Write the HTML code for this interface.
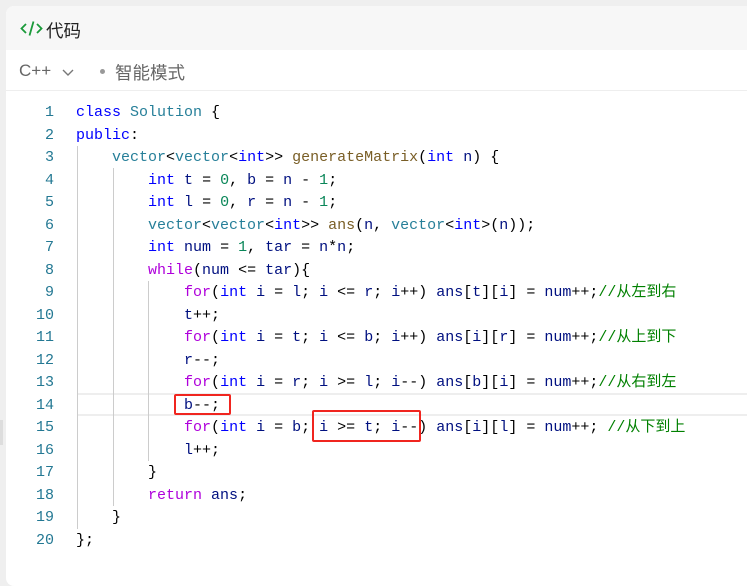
<!DOCTYPE html>
<html><head><meta charset="utf-8"><style>
body{margin:0;width:747px;height:567px;background:#efefef;overflow:hidden;font-family:"Liberation Sans","Noto Sans CJK SC",sans-serif;position:relative}
.card{position:absolute;left:6px;top:6px;width:760px;height:580px;background:#fff;border-radius:8px;overflow:hidden}
.hdr{height:44px;background:#f7f7f7;position:relative;font-size:17.5px;color:#222}
.tb{height:40px;border-bottom:1px solid #eee;position:relative;color:#666;font-size:17px}
.code{position:absolute;left:6px;top:102.2px;font-family:"Liberation Mono","Noto Sans CJK SC",monospace;font-size:15px}
.ln{height:22.5px;line-height:22.5px;white-space:pre;position:relative}
.ln .n{display:inline-block;width:48px;text-align:right;color:#237893;margin-right:22px}
.k{color:#0000ff}.c{color:#267f99}.p{color:#af00db}.g{color:#098658}.f{color:#795e26}.cm{color:#008000}.v{color:#001080}
.guide{position:absolute;width:1px;background:#ccc}
.box{position:absolute;border:2px solid #f0251f;border-radius:2px}
</style></head><body>
<div class="card">
<div class="hdr">
<svg style="position:absolute;left:14px;top:14px" width="23" height="17" viewBox="0 0 23 17" fill="none" stroke="#1a9a3a" stroke-width="1.8"><path d="M6 4L1.5 8.5L6 13M17 4L21.5 8.5L17 13M13.5 1.5L9.5 15.5"/></svg>
<span style="position:absolute;left:40px;top:12px">代码</span></div>
<div class="tb">
<span style="position:absolute;left:13px;top:11px">C++</span>
<svg style="position:absolute;left:56px;top:19px" width="12" height="8" viewBox="0 0 12 8" fill="none" stroke="#777" stroke-width="1.4"><path d="M1 1L6 6L11 1"/></svg>
<span style="position:absolute;left:94px;top:19px;width:5px;height:5px;border-radius:50%;background:#999"></span>
<span style="position:absolute;left:109px;top:10px;font-size:17.5px">智能模式</span>
</div>
</div>
<div style="position:absolute;left:77px;top:393px;width:670px;height:23px;border-top:2px solid #eee;border-bottom:2px solid #eee;box-sizing:border-box"></div>
<div class="guide" style="left:77px;top:146px;height:383px"></div>
<div class="guide" style="left:113px;top:168px;height:338px"></div>
<div class="guide" style="left:148px;top:281px;height:180px"></div>
<div style="position:absolute;left:0;top:420px;width:3px;height:25px;background:#ddd"></div>
<div class="code">
<div class="ln"><span class="n">1</span><span class="k">class</span> <span class="c">Solution</span> {</div>
<div class="ln"><span class="n">2</span><span class="k">public</span>:</div>
<div class="ln"><span class="n">3</span>    <span class="c">vector</span>&lt;<span class="c">vector</span>&lt;<span class="k">int</span>&gt;&gt; <span class="f">generateMatrix</span>(<span class="k">int</span> <span class="v">n</span>) {</div>
<div class="ln"><span class="n">4</span>        <span class="k">int</span> <span class="v">t</span> = <span class="g">0</span>, <span class="v">b</span> = <span class="v">n</span> - <span class="g">1</span>;</div>
<div class="ln"><span class="n">5</span>        <span class="k">int</span> <span class="v">l</span> = <span class="g">0</span>, <span class="v">r</span> = <span class="v">n</span> - <span class="g">1</span>;</div>
<div class="ln"><span class="n">6</span>        <span class="c">vector</span>&lt;<span class="c">vector</span>&lt;<span class="k">int</span>&gt;&gt; <span class="f">ans</span>(<span class="v">n</span>, <span class="c">vector</span>&lt;<span class="k">int</span>&gt;(<span class="v">n</span>));</div>
<div class="ln"><span class="n">7</span>        <span class="k">int</span> <span class="v">num</span> = <span class="g">1</span>, <span class="v">tar</span> = <span class="v">n</span>*<span class="v">n</span>;</div>
<div class="ln"><span class="n">8</span>        <span class="p">while</span>(<span class="v">num</span> &lt;= <span class="v">tar</span>){</div>
<div class="ln"><span class="n">9</span>            <span class="p">for</span>(<span class="k">int</span> <span class="v">i</span> = <span class="v">l</span>; <span class="v">i</span> &lt;= <span class="v">r</span>; <span class="v">i</span>++) <span class="v">ans</span>[<span class="v">t</span>][<span class="v">i</span>] = <span class="v">num</span>++;<span class="cm">//从左到右</span></div>
<div class="ln"><span class="n">10</span>            <span class="v">t</span>++;</div>
<div class="ln"><span class="n">11</span>            <span class="p">for</span>(<span class="k">int</span> <span class="v">i</span> = <span class="v">t</span>; <span class="v">i</span> &lt;= <span class="v">b</span>; <span class="v">i</span>++) <span class="v">ans</span>[<span class="v">i</span>][<span class="v">r</span>] = <span class="v">num</span>++;<span class="cm">//从上到下</span></div>
<div class="ln"><span class="n">12</span>            <span class="v">r</span>--;</div>
<div class="ln"><span class="n">13</span>            <span class="p">for</span>(<span class="k">int</span> <span class="v">i</span> = <span class="v">r</span>; <span class="v">i</span> &gt;= <span class="v">l</span>; <span class="v">i</span>--) <span class="v">ans</span>[<span class="v">b</span>][<span class="v">i</span>] = <span class="v">num</span>++;<span class="cm">//从右到左</span></div>
<div class="ln"><span class="n">14</span>            <span class="v">b</span>--;</div>
<div class="ln"><span class="n">15</span>            <span class="p">for</span>(<span class="k">int</span> <span class="v">i</span> = <span class="v">b</span>; <span class="v">i</span> &gt;= <span class="v">t</span>; <span class="v">i</span>--) <span class="v">ans</span>[<span class="v">i</span>][<span class="v">l</span>] = <span class="v">num</span>++; <span class="cm">//从下到上</span></div>
<div class="ln"><span class="n">16</span>            <span class="v">l</span>++;</div>
<div class="ln"><span class="n">17</span>        }</div>
<div class="ln"><span class="n">18</span>        <span class="p">return</span> <span class="v">ans</span>;</div>
<div class="ln"><span class="n">19</span>    }</div>
<div class="ln"><span class="n">20</span>};</div>
</div>
<div class="box" style="left:174px;top:394px;width:53px;height:17px"></div>
<div class="box" style="left:312px;top:410px;width:105px;height:28px"></div>
</body></html>
